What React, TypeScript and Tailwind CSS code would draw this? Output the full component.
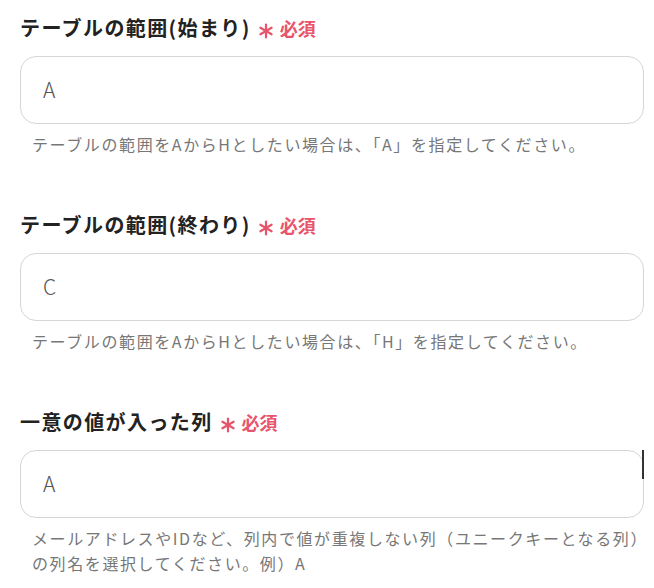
import React from "react"

const fields = [
  {
    label: "テーブルの範囲(始まり)",
    value: "A",
    help: ["テーブルの範囲をAからHとしたい場合は、「A」を指定してください。"],
  },
  {
    label: "テーブルの範囲(終わり)",
    value: "C",
    help: ["テーブルの範囲をAからHとしたい場合は、「H」を指定してください。"],
  },
  {
    label: "一意の値が入った列",
    value: "A",
    help: [
      "メールアドレスやIDなど、列内で値が重複しない列（ユニークキーとなる列）",
      "の列名を選択してください。例）A",
    ],
    cursor: true,
  },
]

const Asterisk = () => (
  <svg width="16" height="16" viewBox="0 0 16 16" className="ml-[7px] mt-[6px]">
    <g stroke="#e8546b" strokeWidth="2.2" strokeLinecap="round">
      <line x1="8" y1="1.5" x2="8" y2="14.5" />
      <line x1="2.4" y1="4.75" x2="13.6" y2="11.25" />
      <line x1="2.4" y1="11.25" x2="13.6" y2="4.75" />
    </g>
  </svg>
)

const Field = ({ label, value, help, cursor }: { label: string; value: string; help: string[]; cursor?: boolean }) => (
  <div className="flex flex-col">
    <div className="flex h-[40px] items-center">
      <span className="text-[20px] font-bold tracking-[1.4px] text-[#222]">{label}</span>
      <Asterisk />
      <span className="ml-[6px] text-[18px] font-bold text-[#e8546b]">必須</span>
    </div>
    <div className="relative mt-[8px] flex h-[68px] items-center rounded-[16px] border border-[#d3d7da] bg-white pl-[22px]">
      <span className="text-[21px] font-light text-[#555]">{value}</span>
      {cursor && <div className="absolute right-[-1px] top-[-1px] h-[29px] w-[2px] bg-[#333]" />}
    </div>
    <p className="mt-[8px] whitespace-nowrap pl-[12px] text-[16px] leading-[25px] tracking-[1.6px] text-[#777]">
      {help.map((line, i) => (
        <span key={i} className="block">
          {line}
        </span>
      ))}
    </p>
  </div>
)

export default function App() {
  return (
    <div
      className="flex w-[654px] flex-col gap-[48px] bg-white pl-[20px] pr-[10px] pt-[8px]"
      style={{ fontFamily: '"Noto Sans CJK JP", "Noto Sans", sans-serif' }}
    >
      {fields.map((f) => (
        <Field key={f.label} {...f} />
      ))}
    </div>
  )
}
